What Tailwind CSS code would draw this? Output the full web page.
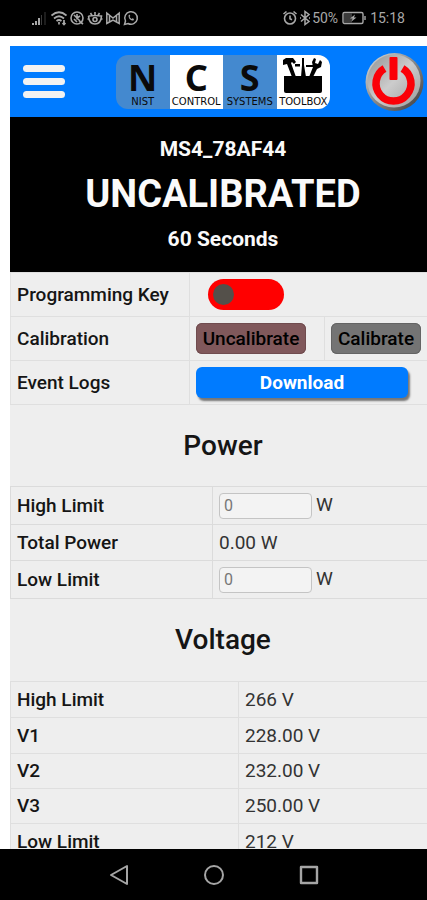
<!DOCTYPE html>
<html lang="en">
<head>
<meta charset="utf-8">
<meta name="viewport" content="width=device-width, initial-scale=1">
<title>NCS Toolbox</title>
<script src="https://cdn.jsdelivr.net/npm/@tailwindcss/browser@4"></script>
</head>
<body class="flex h-screen flex-col overflow-hidden bg-white font-['Roboto',sans-serif] text-[19px] leading-7 text-[#151515]">

<div class="flex h-9 shrink-0 items-center justify-between bg-black pr-[22px] pl-8 text-sm text-[#a8a8a8]">
  <div class="flex items-center gap-[3px]">
    <svg class="h-4 w-4" viewBox="0 0 16 16" fill="currentColor"><path d="M0 13h2v2H0zM3 11h2v4H3zM6 8h2v7H6z"/><path d="M9 5h1v10H9zM12.500 2h1v13h-1z" opacity=".35"/></svg>
    <svg class="h-4 w-4" viewBox="0 0 16 16" fill="none" stroke="currentColor" stroke-width="1.700"><path d="M0.500 5.500Q8 -1 15.500 5.500M3 8.500Q8 4 13 8.500M5.500 11Q8 9 10.500 11"/><path d="M8 12v2.500M13 10v4.500M11.500 13l1.500 1.500 1.500-1.500"/></svg>
    <svg class="h-4 w-3.5" viewBox="0 0 14 16" fill="none" stroke="currentColor" stroke-width="1.600"><circle cx="7" cy="8" r="6"/><path d="M4 5l6 6M7 4v4l3-2M4 9l3 3M9 11l4 3"/></svg>
    <svg class="h-4 w-4" viewBox="0 0 16 16" fill="none" stroke="currentColor" stroke-width="1.600"><path d="M1.500 6Q2 14 8 14Q14 14 14.500 6Q8 5 1.500 6M8 2v3M3.500 3l1.500 2.500M12.500 3l-1.500 2.500M0.500 9h2M13.500 9h2"/><circle cx="8" cy="9.500" r="2"/></svg>
    <svg class="h-4 w-3.5" viewBox="1 0 14 16" fill="none" stroke="currentColor" stroke-width="1.500"><path d="M1.800 3v10.500l2.700-1.500 3.500-2 3.500 2 2.700 1.500V3L8 8zM4.500 5.500V12M11.500 5.500V12"/></svg>
    <svg class="h-4 w-4" viewBox="0 0 16 16" fill="none" stroke="currentColor" stroke-width="1.500"><path d="M1.500 14.500l1-3.500A6.300 6.300 0 1 1 5 13.500z"/><path d="M5.500 5.500c0 3 2 5 5 5l.5-1.500-1.500-.8-1 .8-2-2 .8-1-.8-1.500z" fill="currentColor" stroke="none"/></svg>
  </div>
  <div class="flex items-center">
    <svg class="h-4 w-4" viewBox="0 0 16 16" fill="none" stroke="currentColor" stroke-width="1.600"><circle cx="8" cy="8.500" r="5.500"/><path d="M8 5.500v3.300l2 1M1.500 4l3-2.500M14.500 4l-3-2.500"/></svg>
    <svg class="h-4 w-3.5" viewBox="0 0 14 16" fill="none" stroke="currentColor" stroke-width="1.500"><path d="M3 4.500l8 7-4 3v-13l4 3-8 7M2 8h1M11 8h1"/></svg>
    <span>50%</span>
    <svg class="mx-1 h-4 w-6" viewBox="0 0 24 16" fill="none" stroke="currentColor" stroke-width="1.400"><rect x="1" y="2.500" width="20" height="11" rx="1.500"/><path d="M23 6v4"/><path d="M2 3.500h8v9H2z" fill="currentColor" opacity=".35" stroke="none"/><path d="M13 4.500l-5 4h2.500l-1 3 5-4H12z" fill="currentColor" stroke="none"/></svg>
    <span>15:18</span>
  </div>
</div>

<main class="min-h-0 flex-1 overflow-hidden pt-2.5 pl-2.5">
  <!-- The content runs slightly past the right edge of the window. -->
  <div class="w-[calc(100%+9px)] bg-[#eeeeee]">
    <header class="flex h-[71px] items-center justify-between bg-[#007bff] pr-[11px] pl-[13px]">
      <button type="button" aria-label="Menu" class="flex w-[42px] flex-col gap-1.5">
        <span class="h-[7px] rounded-full bg-[#f2f2f2]"></span>
        <span class="h-[7px] rounded-full bg-[#f2f2f2]"></span>
        <span class="h-[7px] rounded-full bg-[#f2f2f2]"></span>
      </button>
      <div class="ml-4 grid h-[54px] w-[214px] grid-cols-4 overflow-hidden rounded-xl bg-[#4489cf] text-center text-[10px] leading-[10px] text-[#0a0a0a]">
        <div class="flex flex-col gap-0.5 pt-1.5"><b class="font-['Noto_Sans',sans-serif] text-4xl leading-[34px]">N</b><span class="font-['DejaVu_Sans',sans-serif]">NIST</span></div>
        <div class="flex flex-col gap-0.5 bg-white pt-1.5"><b class="font-['Noto_Sans',sans-serif] text-4xl leading-[34px]">C</b><span class="font-['DejaVu_Sans',sans-serif]">CONTROL</span></div>
        <div class="flex flex-col gap-0.5 pt-1.5"><b class="font-['Noto_Sans',sans-serif] text-4xl leading-[34px]">S</b><span class="font-['DejaVu_Sans',sans-serif]">SYSTEMS</span></div>
        <div class="flex flex-col items-center bg-white pt-0.5">
          <svg class="h-10 w-10" viewBox="0 0 40 40" fill="#000"><path d="M1 19h38v15q0 2-2 2H3q-2 0-2-2z"/><path d="M0 3l3-2h7l3 4-2 2-2-2-1 1 5 14h-4L4 7 0 8zM19 1h2v7l2 12h-5l1-12zM12 7h5v2.500h-5zM6 10l3-1 4 11h-3zM23 8h7v2h-7zM31 1l2 1-1 4 3 1 2-4 2 2-1 5-4 2-4 8h-4l4-10-1-5z"/></svg>
          <span class="font-['DejaVu_Sans',sans-serif]">TOOLBOX</span>
        </div>
      </div>
      <button type="button" aria-label="Power">
        <svg class="h-[60px] w-[60px]" viewBox="0 0 60 60"><defs><linearGradient id="rim" x1="0" y1="0" x2="1" y2="1"><stop offset="0" stop-color="#e0e0e0"/><stop offset=".45" stop-color="#909090"/><stop offset="1" stop-color="#383838"/></linearGradient><linearGradient id="face" x1="0" y1="0" x2="1" y2="1"><stop offset="0" stop-color="#929292"/><stop offset=".5" stop-color="#cccccc"/><stop offset="1" stop-color="#9a9a9a"/></linearGradient></defs><circle cx="29.500" cy="30" r="29" fill="url(#rim)"/><circle cx="29" cy="29" r="26.500" fill="url(#face)"/><path d="M19.500 16.500A17.500 17.500 0 1 0 37.500 16.500" fill="none" stroke="#fb0007" stroke-width="7.500"/><rect x="24.500" y="5" width="8" height="23" rx="1" fill="#fb0007"/></svg>
      </button>
    </header>

    <section class="flex h-[155px] flex-col items-center bg-black pt-4 text-[21px] font-bold text-[#fafafa]">
      <p class="leading-8">MS4_78AF44</p>
      <h1 class="text-[38px] leading-[58px]">UNCALIBRATED</h1>
      <p class="leading-8">60 Seconds</p>
    </section>

    <table class="w-full table-fixed border-collapse border-l border-[#e2e2e2] text-left">
      <colgroup><col class="w-[179px]"><col class="w-[135px]"><col></colgroup>
      <tr class="h-11 border-y border-[#dfdfdf]">
        <th scope="row" class="border-r border-[#dfdfdf] pl-1.5 font-medium"><label for="key">Programming Key</label></th>
        <td colspan="2" class="pl-[18px]"><input id="key" type="checkbox" role="switch" class="block h-[31px] w-[76px] appearance-none rounded-full bg-[#ff0000] p-[5px] before:block before:h-[21px] before:w-[21px] before:rounded-full before:bg-[#54504a] before:content-['']"></td>
      </tr>
      <tr class="h-11 border-y border-[#dfdfdf]">
        <th scope="row" class="border-r border-[#dfdfdf] pl-1.5 font-medium">Calibration</th>
        <td class="border-r border-[#dfdfdf] pl-1.5"><button type="button" disabled class="block h-[31px] w-[110px] rounded-md bg-[#80585b] font-medium text-black shadow-[inset_0_0_0_1px_#704c4f]">Uncalibrate</button></td>
        <td class="pl-1.5"><button type="button" disabled class="block h-[31px] w-[90px] rounded-md bg-[#747474] font-medium text-black shadow-[inset_0_0_0_1px_#646464]">Calibrate</button></td>
      </tr>
      <tr class="h-11 border-y border-[#dfdfdf]">
        <th scope="row" class="border-r border-[#dfdfdf] pl-1.5 font-medium">Event Logs</th>
        <td colspan="2" class="pr-7 pl-1.5"><button type="button" class="block h-[31px] w-full rounded-md bg-[#007bff] font-bold text-white shadow-[2px_3px_2px_#777777]">Download</button></td>
      </tr>
    </table>

    <h2 class="flex h-[81px] items-center justify-center text-[28px] font-medium">Power</h2>
    <table class="w-full table-fixed border-collapse border-l border-[#dbdbdb] text-left">
      <colgroup><col class="w-[202px]"><col></colgroup>
      <tr class="h-[38px] border-y border-[#dbdbdb]">
        <th scope="row" class="border-r border-[#dbdbdb] pl-1.5 font-medium"><label for="high">High Limit</label></th>
        <td class="pl-1.5"><div class="flex gap-1 text-[#333333]"><input id="high" value="0" class="h-[26px] w-[93px] rounded-sm border border-[#c4c4c4] bg-[#f3f3f3] px-1 text-base text-[#777777]"><span class="leading-6">W</span></div></td>
      </tr>
      <tr class="h-9 border-y border-[#dbdbdb]">
        <th scope="row" class="border-r border-[#dbdbdb] pl-1.5 font-medium">Total Power</th>
        <td class="pl-1.5 text-[#333333]">0.00 W</td>
      </tr>
      <tr class="h-[38px] border-y border-[#dbdbdb]">
        <th scope="row" class="border-r border-[#dbdbdb] pl-1.5 font-medium"><label for="low">Low Limit</label></th>
        <td class="pl-1.5"><div class="flex gap-1 text-[#333333]"><input id="low" value="0" class="h-[26px] w-[93px] rounded-sm border border-[#c4c4c4] bg-[#f3f3f3] px-1 text-base text-[#777777]"><span class="leading-6">W</span></div></td>
      </tr>
    </table>

    <h2 class="flex h-[82px] items-center justify-center text-[28px] font-medium">Voltage</h2>
    <table class="w-full table-fixed border-collapse border-l border-[#dfdfdf] text-left">
      <colgroup><col class="w-[228px]"><col></colgroup>
      <tr class="h-9 border-y border-[#dfdfdf]"><th scope="row" class="border-r border-[#dfdfdf] pl-1.5 font-medium">High Limit</th><td class="pl-1.5 text-[#333333]">266 V</td></tr>
      <tr class="h-9 border-y border-[#dfdfdf]"><th scope="row" class="border-r border-[#dfdfdf] pl-1.5 font-medium">V1</th><td class="pl-1.5 text-[#333333]">228.00 V</td></tr>
      <tr class="h-[35px] border-y border-[#dfdfdf]"><th scope="row" class="border-r border-[#dfdfdf] pl-1.5 font-medium">V2</th><td class="pl-1.5 text-[#333333]">232.00 V</td></tr>
      <tr class="h-[35px] border-y border-[#dfdfdf]"><th scope="row" class="border-r border-[#dfdfdf] pl-1.5 font-medium">V3</th><td class="pl-1.5 text-[#333333]">250.00 V</td></tr>
      <tr class="h-9 border-y border-[#dfdfdf]"><th scope="row" class="border-r border-[#dfdfdf] pl-1.5 font-medium">Low Limit</th><td class="pl-1.5 text-[#333333]">212 V</td></tr>
    </table>
  </div>
</main>

<nav class="flex h-[51px] shrink-0 items-center justify-center gap-[73px] bg-black text-[#a5a5a5]">
  <button type="button" aria-label="Back"><svg class="h-[22px] w-[22px]" viewBox="0 0 22 22" fill="none" stroke="currentColor" stroke-width="2" stroke-linejoin="round"><path d="M19 2v18L3 11z"/></svg></button>
  <button type="button" aria-label="Home"><svg class="h-[22px] w-[22px]" viewBox="0 0 22 22" fill="none" stroke="currentColor" stroke-width="2"><circle cx="11" cy="11" r="9"/></svg></button>
  <button type="button" aria-label="Recent apps"><svg class="h-[22px] w-[22px]" viewBox="0 0 22 22" fill="none" stroke="currentColor" stroke-width="2.400" stroke-linejoin="round"><path d="M3 3h16v16H3z"/></svg></button>
</nav>
</body>
</html>
